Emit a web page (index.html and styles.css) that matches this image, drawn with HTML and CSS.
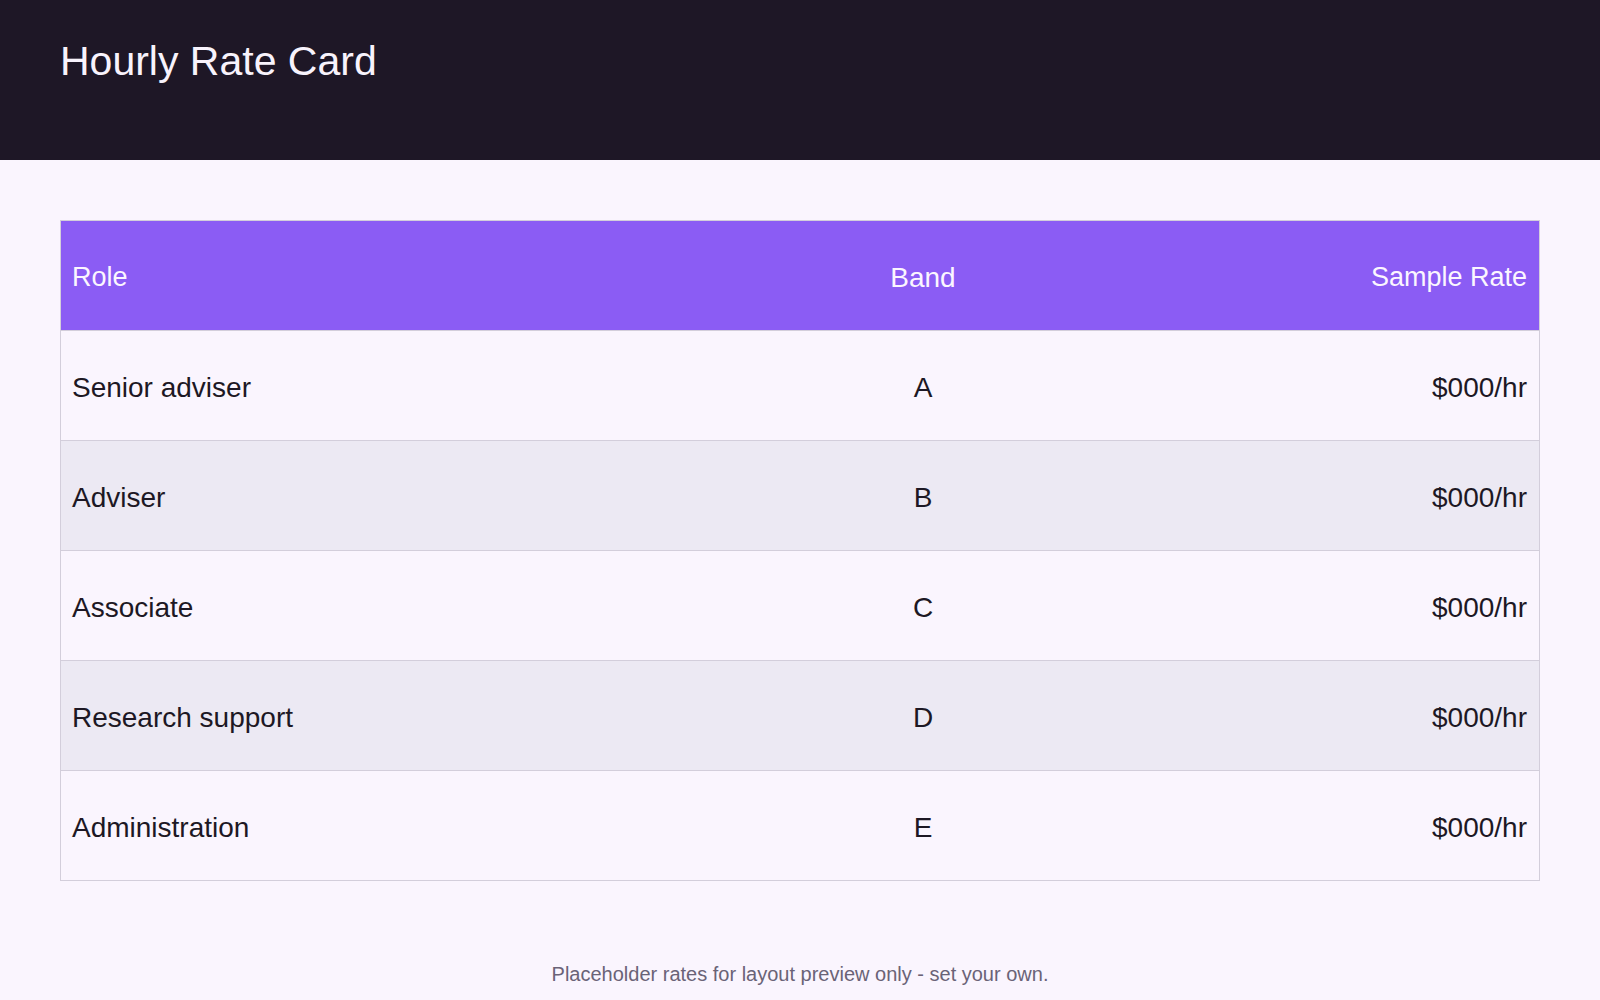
FILE: index.html
```html
<!DOCTYPE html>
<html lang="en">
<head>
<meta charset="utf-8">
<title>Hourly Rate Card</title>
<link rel="stylesheet" href="styles.css">
</head>
<body>
<header class="topbar">
  <h1 class="title">Hourly Rate Card</h1>
</header>
<main class="content">
  <table class="rates">
    <colgroup>
      <col class="col-role">
      <col class="col-band">
      <col class="col-rate">
    </colgroup>
    <thead>
      <tr>
        <th class="c-role">Role</th>
        <th class="c-band">Band</th>
        <th class="c-rate">Sample Rate</th>
      </tr>
    </thead>
    <tbody>
      <tr><td class="c-role">Senior adviser</td><td class="c-band">A</td><td class="c-rate">$000/hr</td></tr>
      <tr><td class="c-role">Adviser</td><td class="c-band">B</td><td class="c-rate">$000/hr</td></tr>
      <tr><td class="c-role">Associate</td><td class="c-band">C</td><td class="c-rate">$000/hr</td></tr>
      <tr><td class="c-role">Research support</td><td class="c-band">D</td><td class="c-rate">$000/hr</td></tr>
      <tr><td class="c-role">Administration</td><td class="c-band">E</td><td class="c-rate">$000/hr</td></tr>
    </tbody>
  </table>
</main>
<footer class="note">Placeholder rates for layout preview only - set your own.</footer>
</body>
</html>
```

FILE: styles.css
```css
* { box-sizing: border-box; }

html, body {
  margin: 0;
  padding: 0;
  background: #faf5fe;
  font-family: "Liberation Sans", Arial, sans-serif;
  color: #1d1824;
}

.topbar {
  height: 160px;
  background: #1e1726;
  padding: 36px 60px 0;
}

.title {
  margin: 0;
  font-weight: 400;
  font-size: 41px;
  line-height: 50px;
  color: #f8f3fc;
}

.content {
  padding: 60px 60px 0;
}

.rates {
  width: 100%;
  border-collapse: collapse;
  table-layout: fixed;
  border: 1px solid #d3cedb;
  font-size: 28px;
}

.col-role { width: 740px; }
.col-band { width: 246px; }

.rates th,
.rates td {
  height: 110px;
  padding: 4px 12px 0 11px;
  vertical-align: middle;
  font-weight: 400;
}

.rates thead th {
  background: #8b5cf4;
  color: #fbf6ff;
}

.rates thead th.c-role,
.rates thead th.c-rate {
  font-size: 27px;
}

.rates tbody td {
  border-top: 1px solid #d3cedb;
  background: #faf5fe;
}

.rates tbody tr:nth-child(even) td {
  background: #ece9f3;
}

.c-role { text-align: left; }
.c-band { text-align: center; }
.c-rate { text-align: right; }

.note {
  padding-top: 79px;
  text-align: center;
  font-size: 20px;
  line-height: 28px;
  color: #6a6377;
}
```
